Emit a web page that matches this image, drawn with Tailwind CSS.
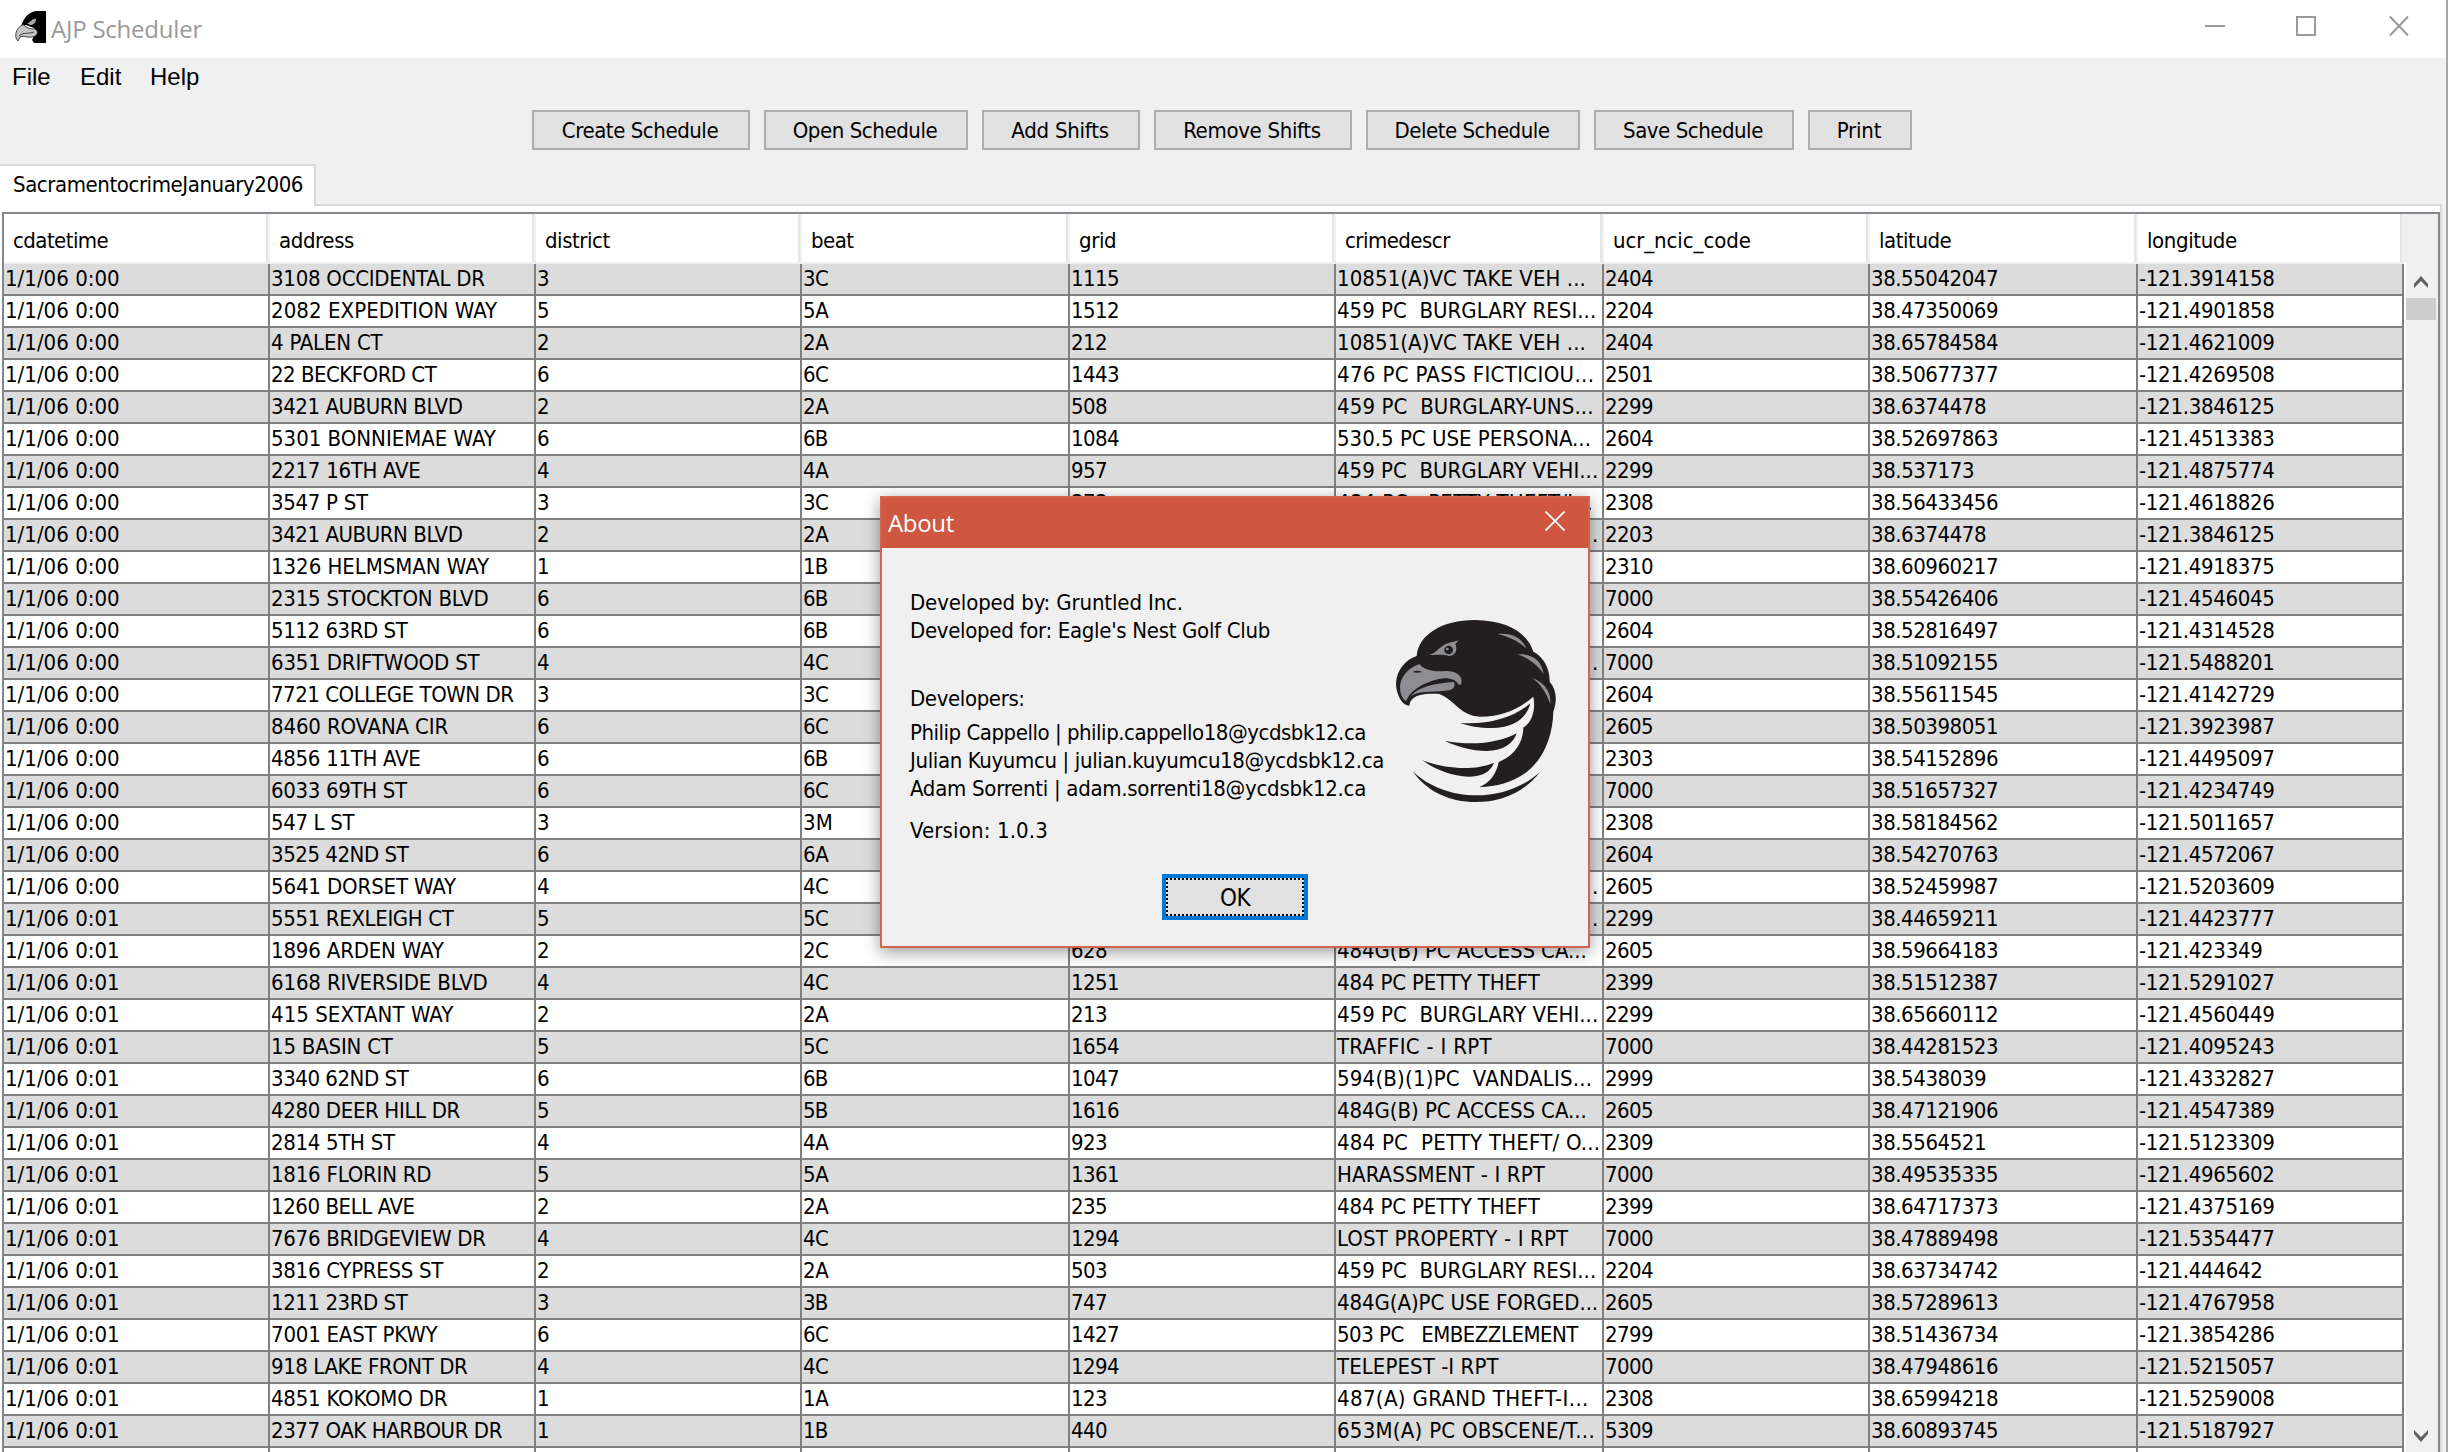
<!DOCTYPE html>
<html lang="en">
<head>
<meta charset="utf-8">
<title>AJP Scheduler</title>
<script src="https://cdn.jsdelivr.net/npm/@tailwindcss/browser@4"></script>
</head>
<body class="bg-[#f0f0f0]">
<div class="relative w-[2448px] h-[1452px] overflow-hidden bg-[#f0f0f0] text-black font-['DejaVu_Sans_Condensed','DejaVu_Sans',sans-serif] [font-stretch:condensed] text-[22px]">
  <div class="flex h-full">
    <div class="flex w-[2446px] flex-col">
      <header class="flex h-[58px] shrink-0 items-center bg-white pl-[14px]">
        <svg class="h-8 w-8 -mt-1" viewBox="0 0 32 32">
          <path d="M32 0V32H20L18 29L20 25L23 22L20 17L12 14L7 16C9 8 14 0 24 0Z" fill="#000"/>
          <path d="M8 14C3 17 1 22 2 27L4 30L6 26C10 24 15 28 21 25C24 23 24 20 21 18C16 18 12 17 10 14Z" fill="#c4c4c4" stroke="#444"/>
          <path d="M5 25C9 21 15 23 20 21" stroke="#444" fill="none"/>
          <path d="M13 12C17 12 18 7 22 8C22 12 19 14 16 14Z" fill="#aaa"/>
        </svg>
        <span data-w="151" class="ml-[5px] w-[161px] whitespace-pre font-['Open_Sans',sans-serif] [font-stretch:normal] text-[24px] leading-8 text-[#999] -mt-[1px]">AJP Scheduler</span>
        <svg class="ml-[1993px] h-5 w-[204px] -mt-[6px]" viewBox="0 0 204 20" fill="none" stroke="#999" stroke-width="2"><path d="M0 10H20M92 1H110V19H92ZM185 .5L203 19.500M203 .5L185 19.500"/></svg>
      </header>
      <nav class="flex h-[52px] shrink-0 pl-3 pt-[3px] font-['Liberation_Sans',sans-serif] text-[24px] leading-8">
        <span class="w-[68px]">File</span><span class="w-[70px]">Edit</span><span>Help</span>
      </nav>
      <div class="flex h-10 shrink-0 gap-[14px] pl-[532px]" id="bar"></div>
      <div class="mt-[14px] flex h-[42px] shrink-0">
        <div class="h-full w-[316px] border-t-2 border-r-2 border-[#d9d9d9] bg-white pl-[13px] leading-[38px]"><span data-w="290">SacramentocrimeJanuary2006</span></div>
        <div class="w-[2126px] border-b-2 border-[#d9d9d9]"></div>
      </div>
      <main class="w-[2442px] grow border-r-2 border-[#d9d9d9] bg-white pl-[2px] pt-[6px]">
        <div class="flex h-full w-[2438px] border-2 border-b-0 border-[#828790]">
          <div class="w-[2400px] shrink-0">
            <div id="head" class="flex h-[50px] border-b-2 border-[#f0f0f0]"></div>
            <div id="rows" class="h-[1188px] overflow-hidden"></div>
          </div>
          <div class="flex w-[34px] shrink-0 flex-col bg-[#f0f0f0]">
            <div class="h-[48px] -ml-[2px] shrink-0 bg-[#f0f0f0]"></div>
            <div class="flex grow flex-col items-center border-l-2 border-white pt-[2px]">
              <svg class="mt-[12px] h-3 w-[14px] shrink-0 -ml-[2px]" viewBox="0 0 14 12"><path d="M0 8L7 0L14 8V12L7 5L0 12Z" fill="#606060"/></svg>
              <div class="mt-[10px] h-[22px] w-[30px] shrink-0 -ml-[2px] bg-[#cdcdcd]"></div>
              <svg class="mt-auto mb-[10px] h-3 w-[14px] shrink-0 -ml-[2px]" viewBox="0 0 14 12"><path d="M0 0L7 7L14 0V4L7 12L0 4Z" fill="#606060"/></svg>
            </div>
          </div>
        </div>
      </main>
    </div>
    <div class="w-[2px] bg-[#a6a6a6]"></div>
  </div>

  <section class="absolute left-[880px] top-[496px] flex h-[452px] w-[710px] flex-col border-2 border-[#d4634d] bg-[#f0f0f0] shadow-[0_4px_16px_rgba(0,0,0,0.4)]">
    <div class="flex h-[50px] shrink-0 items-center justify-between bg-[#d0573f] pl-[6px] pr-[23px] font-['Open_Sans',sans-serif] [font-stretch:normal] text-[24px] text-white">
      <span data-w="66">About</span>
      <svg class="-mt-[5px] h-5 w-5" viewBox="0 0 20 20" stroke="#fff" stroke-width="1.800"><path d="M.5 .5L19.500 19.500M19.500 .5L.5 19.500"/></svg>
    </div>
    <div class="flex min-h-0 grow">
      <div class="w-[498px] shrink-0 whitespace-nowrap pl-[28px] pt-[41px] leading-[28px]">
        <p><span data-w="273">Developed by: Gruntled Inc.</span></p>
        <p><span data-w="360">Developed for: Eagle's Nest Golf Club</span></p>
        <p class="mt-[40px]"><span data-t>Developers:</span></p>
        <p class="mt-[6px]"><span data-w="456">Philip Cappello | philip.cappello18@ycdsbk12.ca</span></p>
        <p><span data-w="474">Julian Kuyumcu | julian.kuyumcu18@ycdsbk12.ca</span></p>
        <p><span data-w="456">Adam Sorrenti | adam.sorrenti18@ycdsbk12.ca</span></p>
        <p class="mt-[14px]"><span data-w="138">Version: 1.0.3</span></p>
      </div>
      <svg class="mt-[52px] h-[220px] w-[200px] shrink-0" viewBox="0 0 600 660">
        <path fill="#231f20" d="M110 168C115 105 185 60 285 60C380 62 440 95 460 155C490 170 510 205 509 245C530 270 532 300 520 335C518 410 490 480 435 520C395 548 350 560 298 562C330 548 350 520 356 486C400 470 430 430 430 382C455 370 468 330 460 290C420 325 370 350 300 350C240 347 225 300 178 282C130 280 92 284 88 317C65 317 48 280 48 250C50 210 75 180 110 168Z"/>
        <path fill="#8e8d92" d="M118 192C80 205 60 235 60 262C60 280 66 295 78 304C88 275 120 255 150 245C185 230 225 230 236 255L244 252C250 225 225 212 195 213C160 216 132 210 118 192Z"/>
        <path fill="#8e8d92" d="M90 290C115 260 165 250 222 246C228 262 218 272 195 272C150 278 115 270 90 290Z"/>
        <path d="M97 216Q112 208 126 216Q112 221 97 216Z" fill="#231f20"/>
        <path fill="#8e8d92" d="M147 165C170 160 182 135 205 129L236 121L226 132C234 152 225 168 206 168C188 162 172 166 147 165Z"/>
        <ellipse cx="206" cy="150" rx="13" ry="13" fill="#231f20"/><circle cx="202" cy="147" r="4" fill="#8e8d92"/>
        <path fill="#8e8d92" d="M353 102C390 98 425 110 439 146C415 122 385 110 353 102ZM413 163C455 160 485 180 491 222C470 192 445 175 413 163ZM456 233C490 245 515 275 511 312C498 275 480 250 456 233Z"/>
        <path fill="#231f20" d="M240 369C320 375 400 355 451 310C440 355 400 384 335 384C300 384 265 378 240 369ZM194 422C270 437 350 432 410 400C400 430 370 453 320 453C275 452 230 440 194 422ZM127 481C190 505 280 515 342 488C332 515 305 530 265 530C215 528 165 508 127 481ZM97 512C190 605 370 615 480 516C430 580 360 606 287 606C210 606 140 575 97 512Z"/>
      </svg>
    </div>
    <div class="mx-auto mb-[26px] h-[46px] w-[146px] shrink-0 border-4 border-[#0078d7] bg-[#e1e1e1]">
      <div class="flex h-full items-center justify-center border-2 border-dotted border-black pt-[1px] text-[24px]"><span data-t>OK</span></div>
    </div>
  </section>
</div>
<script>
const buttons = [['Create Schedule',218],['Open Schedule',204],['Add Shifts',158],['Remove Shifts',198],['Delete Schedule',214],['Save Schedule',200],['Print',104]];
const edges = [4,270,536,802,1070,1336,1604,1870,2138,2404];
const heads = ['cdatetime','address','district','beat','grid','crimedescr','ucr_ncic_code','latitude','longitude'];
const data = `3108 OCCIDENTAL DR;3;3C;1115;10851(A)VC TAKE VEH ...;2404;38.55042047;-121.3914158
2082 EXPEDITION WAY;5;5A;1512;459 PC  BURGLARY RESI...;2204;38.47350069;-121.4901858
4 PALEN CT;2;2A;212;10851(A)VC TAKE VEH ...;2404;38.65784584;-121.4621009
22 BECKFORD CT;6;6C;1443;476 PC PASS FICTICIOU...;2501;38.50677377;-121.4269508
3421 AUBURN BLVD;2;2A;508;459 PC  BURGLARY-UNS...;2299;38.6374478;-121.3846125
5301 BONNIEMAE WAY;6;6B;1084;530.5 PC USE PERSONA...;2604;38.52697863;-121.4513383
2217 16TH AVE;4;4A;957;459 PC  BURGLARY VEHI...;2299;38.537173;-121.4875774
3547 P ST;3;3C;373;484 PC   PETTY THEFT/I...;2308;38.56433456;-121.4618826
3421 AUBURN BLVD;2;2A;508;459 PC  BURGLARY VEHI...;2203;38.6374478;-121.3846125
1326 HELMSMAN WAY;1;1B;444;1708 US   THEFT;2310;38.60960217;-121.4918375
2315 STOCKTON BLVD;6;6B;1005;ASSAULT - I RPT;7000;38.55426406;-121.4546045
5112 63RD ST;6;6B;1088;530.5 PC USE PERSON;2604;38.52816497;-121.4314528
6351 DRIFTWOOD ST;4;4C;1261;459 PC  BURGLARY VEHI...;7000;38.51092155;-121.5488201
7721 COLLEGE TOWN DR;3;3C;888;530.5 PC USE PERSON;2604;38.55611545;-121.4142729
8460 ROVANA CIR;6;6C;1447;484G(B) PC ACCESS;2605;38.50398051;-121.3923987
4856 11TH AVE;6;6B;1054;484J PC PUBLISH;2303;38.54152896;-121.4495097
6033 69TH ST;6;6C;1403;TELEPEST -I RPT;7000;38.51657327;-121.4234749
547 L ST;3;3M;742;484 PC   PETTY THEFT;2308;38.58184562;-121.5011657
3525 42ND ST;6;6A;1034;530.5 PC USE PERSON;2604;38.54270763;-121.4572067
5641 DORSET WAY;4;4C;1225;459 PC  BURGLARY VEHI...;2605;38.52459987;-121.5203609
5551 REXLEIGH CT;5;5C;1656;459 PC  BURGLARY VEHI...;2299;38.44659211;-121.4423777
1896 ARDEN WAY;2;2C;628;484G(B) PC ACCESS CA...;2605;38.59664183;-121.423349
6168 RIVERSIDE BLVD;4;4C;1251;484 PC PETTY THEFT;2399;38.51512387;-121.5291027
415 SEXTANT WAY;2;2A;213;459 PC  BURGLARY VEHI...;2299;38.65660112;-121.4560449
15 BASIN CT;5;5C;1654;TRAFFIC - I RPT;7000;38.44281523;-121.4095243
3340 62ND ST;6;6B;1047;594(B)(1)PC  VANDALIS...;2999;38.5438039;-121.4332827
4280 DEER HILL DR;5;5B;1616;484G(B) PC ACCESS CA...;2605;38.47121906;-121.4547389
2814 5TH ST;4;4A;923;484 PC  PETTY THEFT/ O...;2309;38.5564521;-121.5123309
1816 FLORIN RD;5;5A;1361;HARASSMENT - I RPT;7000;38.49535335;-121.4965602
1260 BELL AVE;2;2A;235;484 PC PETTY THEFT;2399;38.64717373;-121.4375169
7676 BRIDGEVIEW DR;4;4C;1294;LOST PROPERTY - I RPT;7000;38.47889498;-121.5354477
3816 CYPRESS ST;2;2A;503;459 PC  BURGLARY RESI...;2204;38.63734742;-121.444642
1211 23RD ST;3;3B;747;484G(A)PC USE FORGED...;2605;38.57289613;-121.4767958
7001 EAST PKWY;6;6C;1427;503 PC   EMBEZZLEMENT;2799;38.51436734;-121.3854286
918 LAKE FRONT DR;4;4C;1294;TELEPEST -I RPT;7000;38.47948616;-121.5215057
4851 KOKOMO DR;1;1A;123;487(A) GRAND THEFT-I...;2308;38.65994218;-121.5259008
2377 OAK HARBOUR DR;1;1B;440;653M(A) PC OBSCENE/T...;5309;38.60893745;-121.5187927
;;;;;;;`.split('\n');
bar.innerHTML = buttons.map(([t,w]) => `<div class="flex shrink-0 items-center justify-center border-2 border-[#adadad] bg-[#e1e1e1] pr-[2px]" style="width:${w}px"><span data-t>${t}</span></div>`).join('');
head.innerHTML = heads.map((t,i) => `<div class="shrink-0 border-r-2 border-[#f0f0f0] bg-white" style="width:${edges[i+1]-edges[i]}px"><div class="h-full border-r-2 border-[#e5e5e5] pl-[9px] pt-[13px] leading-[28px]"><span data-t>${t}</span></div></div>`).join('');
rows.innerHTML = data.map((r,n) => `<div class="flex h-8 border-b-2 border-[#808080] ${n % 2 ? 'bg-white' : 'bg-[#dcdcdc]'}">` +
  [r[0] === ';' ? '' : n < 20 ? '1/1/06 0:00' : '1/1/06 0:01', ...r.split(';')].map((t,i) => `<div class="shrink-0 overflow-hidden whitespace-pre border-r-2 border-[#808080] pl-[1px] leading-[30px]" style="width:${edges[i+1]-edges[i]}px"><span data-t>${t}</span></div>`).join('') + '</div>').join('');

const adv = {' ':273,A:605,B:560,C:591,D:650,E:545,F:510,G:645,H:665,I:370,J:409,K:565,L:475,M:810,N:650,O:695,P:545,Q:690,R:605,S:560,T:560,U:640,V:591,W:890,X:565,Y:565,Z:520,a:525,b:553,c:461,d:553,e:526,f:318,g:553,h:558,i:229,j:282,k:498,l:229,m:840,n:558,o:543,p:553,q:553,r:360,s:446,t:334,u:558,v:498,w:742,x:495,y:498,z:444,'.':318,':':354,'-':385,'(':383,')':383,'/':382,'|':382,'@':909,"'":211,'_':546};
function fit() {
  document.querySelectorAll('[data-t],[data-w]').forEach(e => {
    const s = e.textContent; if (!s) return;
    e.style.letterSpacing = '0px';
    const size = parseFloat(getComputedStyle(e).fontSize);
    const trail = s.endsWith('...') ? 4 : 0;
    const goal = e.dataset.w ? +e.dataset.w : [...s].reduce((a,c) => a + (adv[c] || 546), 0) * size / 1000 + trail;
    const range = document.createRange(); range.selectNodeContents(e);
    e.style.letterSpacing = (goal - range.getBoundingClientRect().width) / s.length + 'px';
  });
}
fit();
addEventListener('load', fit);
document.fonts.ready.then(fit);
new ResizeObserver(fit).observe(document.getElementById('bar'));
</script>
</body>
</html>
